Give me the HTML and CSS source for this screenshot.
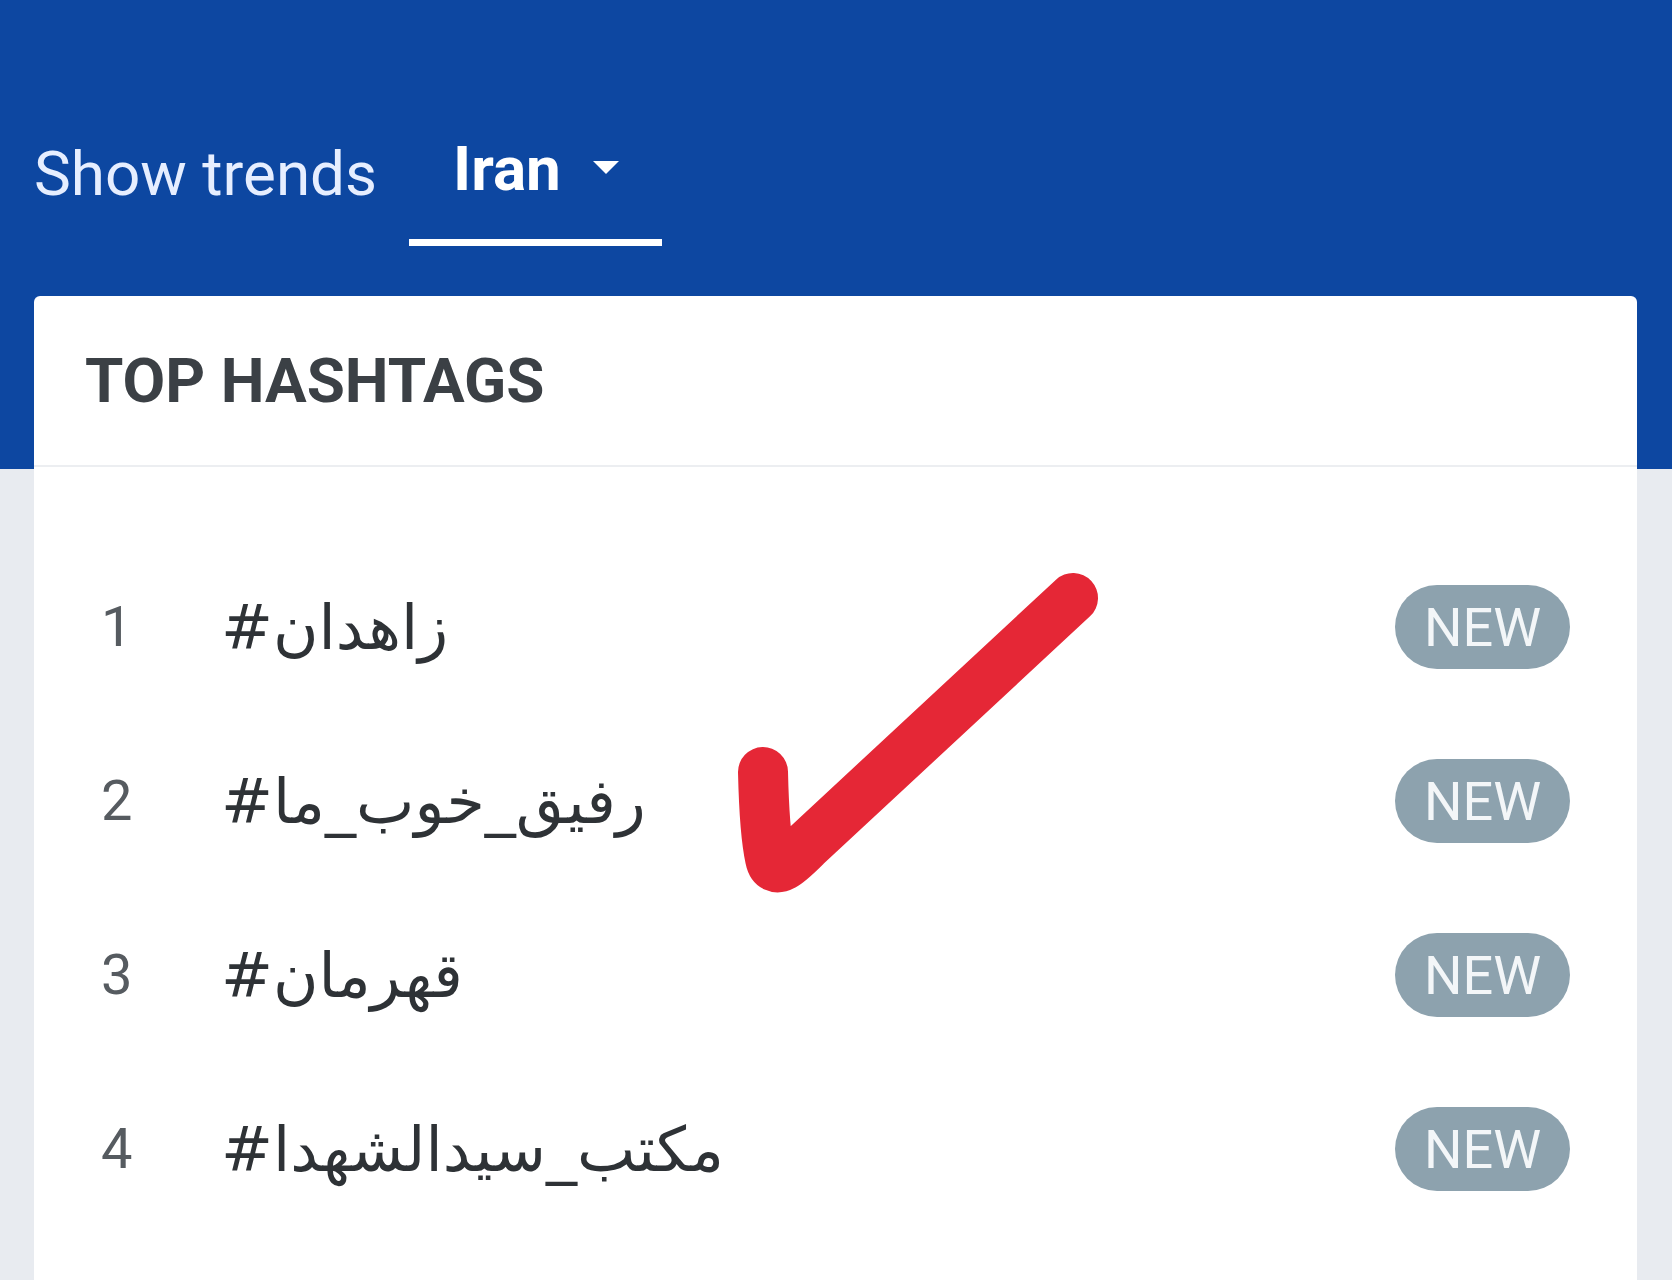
FILE: index.html
```html
<!DOCTYPE html>
<html>

<head>
	<meta charset="utf-8">
	<title>Trends</title>
	<meta name="viewport" content="width=device-width, initial-scale=1">
	<link rel="stylesheet" href="styles.css">
</head>

<body>
	<nav class='trends-nav'>
		<span class='trends-nav__label'>Show trends</span>
		<div class='trends-nav__tab'>
			<span>Iran</span>
			<span class='caret'></span>
		</div>
	</nav>

	<section class='card'>
		<header class='card__head'>TOP HASHTAGS</header>
		<ol class='tags'>
			<li class='tag'>
				<span class='tag__rank'>1</span>
				<span class='tag__name'>#زاهدان</span>
				<span class='badge'>NEW</span>
			</li>
			<li class='tag'>
				<span class='tag__rank'>2</span>
				<span class='tag__name'>#رفیق_خوب_ما</span>
				<span class='badge'>NEW</span>
			</li>
			<li class='tag'>
				<span class='tag__rank'>3</span>
				<span class='tag__name'>#قهرمان</span>
				<span class='badge'>NEW</span>
			</li>
			<li class='tag'>
				<span class='tag__rank'>4</span>
				<span class='tag__name'>#مکتب_سیدالشهدا</span>
				<span class='badge'>NEW</span>
			</li>
		</ol>

		<!-- hand drawn mark on top of the list -->
		<svg class='mark' viewBox='700 540 420 380' width='420' height='380'>
			<path d='M763 772 C764 815 766 840 770 858 C774 878 790 862 806 846 L1073 598'
				fill='none' stroke='#e52736' stroke-width='50' stroke-linecap='round' stroke-linejoin='round' />
		</svg>
	</section>
</body>

</html>
```

FILE: styles.css
```css
* {
	box-sizing: border-box;
}

html,
body {
	margin: 0;
	padding: 0;
}

body {
	height: 1280px;
	overflow: hidden;
	font-family: Roboto, "Liberation Sans", sans-serif;
	background: linear-gradient(#0d47a1 0, #0d47a1 469px, #e8ebf0 469px);
}

.trends-nav {
	display: flex;
	align-items: flex-start;
	gap: 32px;
	padding: 138px 34px 0;
	height: 296px;
}

.trends-nav__label {
	margin-top: 5px;
	font-size: 62px;
	line-height: 62px;
	color: #e6eeff;
}

.trends-nav__tab {
	display: flex;
	align-items: center;
	gap: 32px;
	padding: 0 43px 39px 44px;
	border-bottom: 7px solid #fff;
	font-size: 62px;
	line-height: 62px;
	font-weight: bold;
	color: #fff;
}

.caret {
	width: 0;
	height: 0;
	margin-top: -4px;
	border-top: 13px solid #fff;
	border-left: 13px solid transparent;
	border-right: 13px solid transparent;
}

.card {
	position: relative;
	margin: 0 35px 0 34px;
	height: 1100px;
	background-color: #fff;
	border-radius: 6px 6px 0 0;
}

.card__head {
	display: flex;
	align-items: center;
	height: 171px;
	padding-left: 51px;
	border-bottom: 2px solid #eceef1;
	font-size: 62px;
	font-weight: bold;
	color: #3b4045;
}

.tags {
	list-style: none;
	margin: 0;
	padding: 73px 0 0;
}

.tag {
	display: flex;
	align-items: center;
	height: 174px;
	padding: 0 67px;
}

.tag__rank {
	width: 120px;
	font-size: 56px;
	color: #565b60;
}

.tag__name {
	font-family: "DejaVu Sans", sans-serif;
	font-size: 62px;
	color: #2e3236;
	direction: ltr;
}

.badge {
	display: flex;
	align-items: center;
	justify-content: center;
	margin-left: auto;
	width: 175px;
	height: 84px;
	border-radius: 42px;
	background-color: #8da2ae;
	color: #f3f6f8;
	font-size: 54px;
}

.mark {
	position: absolute;
	left: 666px;
	top: 244px;
}
```
